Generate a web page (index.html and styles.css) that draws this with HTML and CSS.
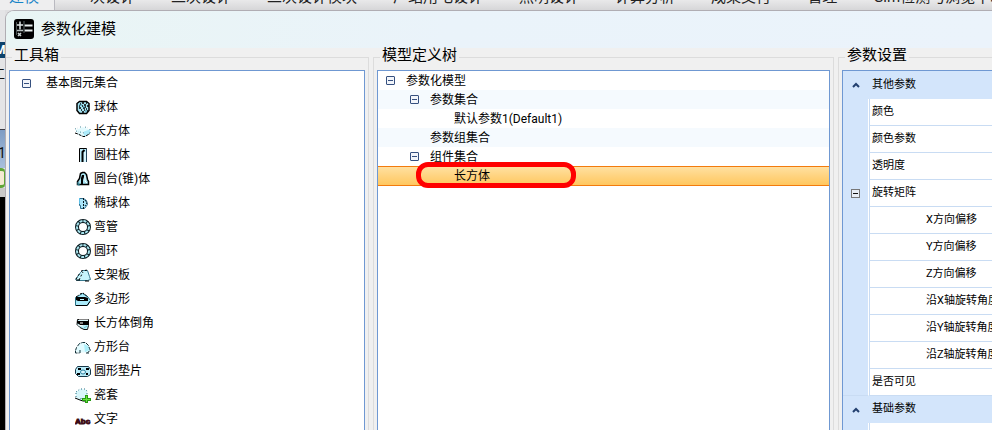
FILE: index.html
```html
<!DOCTYPE html>
<html lang="zh-CN">
<head>
<meta charset="utf-8">
<title>参数化建模</title>
<link rel="stylesheet" href="styles.css">
</head>
<body>
<div class="desktop">
  <nav class="ribbon">
    <a class="tab tab-active" href="#">建模</a>
    <a class="tab" href="#">一次设计</a>
    <a class="tab" href="#">二次设计</a>
    <a class="tab" href="#">二次设计模块</a>
    <a class="tab" href="#">厂站用电设计</a>
    <a class="tab" href="#">照明设计</a>
    <a class="tab" href="#">计算分析</a>
    <a class="tab" href="#">成果交付</a>
    <a class="tab" href="#">管理</a>
    <a class="tab" href="#">Gim检测与浏览中心</a>
  </nav>
  <div class="workspace">
    <aside class="backdrop">
      <div class="bd-top"></div>
      <div class="bd-logo">M</div>
      <div class="bd-link">工</div>
      <div class="bd-tab">1</div>
      <div class="bd-tool"></div>
      <div class="bd-edge"></div>
      <div class="bd-canvas"></div>
    </aside>
    <main class="window">
      <header class="titlebar">
        <svg class="app-icon" viewBox="0 0 20 20" aria-hidden="true">
          <rect width="20" height="20" rx="3" fill="#000"/>
          <path d="M3 6h6M6 2.500v8" stroke="#dfe6e6" stroke-width="1.500" fill="none"/>
          <path d="M10.500 6.500h8M10.500 11.500h8" stroke="#e8eeee" stroke-width="2" fill="none"/>
          <path d="M10 2v12" stroke="#5d6666" fill="none"/>
          <path d="M2 11.500h7" stroke="#b5bebe" stroke-width="1.500"/>
          <path d="M4 14l3 3M7 14l-3 3" stroke="#c8d0d0" stroke-width="1.500" fill="none"/>
          <path d="M2.500 3v13" stroke="#4b5252"/>
        </svg>
        <h1>参数化建模</h1>
      </header>
      <div class="groups">
        <fieldset class="group group-first">
          <legend>工具箱</legend>
          <ul class="panel toolbox">
            <li class="tool-root"><button class="toggle" type="button" aria-label="折叠"></button>基本图元集合</li>
            <li><svg viewBox="0 0 16 16"><path d="M4.500 2.500h7l2.500 2v7l-2.500 3h-7L2 11.500v-7z" fill="#a5e2f0" stroke="#000" stroke-width="1.500"/><path d="M4 7h1M5 5h1M7 4h2M11 4h1M4 9h2M7 7h1M9 6h2M12 7h2M6 11h1M8 9h2M11 10h1M7 13h2M12 12h1M10 8h1M9 11h1" stroke="#000" stroke-width="1.500"/><path d="M4 6h3M8 8h2M10 12h2" stroke="#39829b"/></svg>球体</li>
            <li><svg viewBox="0 0 16 16"><path d="M1 7L8 4l7 3v4l-6 3-6-2z" fill="#e2fafe"/><path d="M9 8.500l6-2v4l-6 3z" fill="#abeafa"/><path d="M0 6l3-1M5 4h3M10 4l3 1M15 6v5M1 8l3 1M5 9l4 1" stroke="#498b9b" stroke-dasharray="1 2" fill="none"/><path d="M0 10l3 1 5 2.500h2l5-3" stroke="#000" stroke-dasharray="3 1" fill="none"/></svg>长方体</li>
            <li><svg viewBox="0 0 16 16"><path d="M4.500 15V1.500h7V15" fill="#b9ebfa" stroke="#000"/><path d="M7.500 15V5l2-2" stroke="#000" stroke-width="2" fill="none"/><path d="M9 5h2v10H9z" fill="#d8f6ff"/><path d="M11.500 2v13" stroke="#23455d"/></svg>圆柱体</li>
            <li><svg viewBox="0 0 16 16"><path d="M5.500 2.500l2-1h2l2 2 1 5 1 2v3H2.500v-3l2-3z" fill="#a5e2f0" stroke="#000" stroke-width="1.500"/><path d="M6 14V7l1-3h2v2l-1 3v4z" fill="#000"/><path d="M10 5v5l2 2" stroke="#fff" fill="none"/><path d="M3 11v3h2" stroke="#3694aa" fill="none"/></svg>圆台(锥)体</li>
            <li><svg viewBox="0 0 16 16"><path d="M4.500 3.500h4l3 2 1 4-3 4h-4v-3h-1z" fill="#a9e5fa" stroke="#306e8d"/><path d="M8.500 3v11M10 5l2 3-2 3" stroke="#071820" stroke-dasharray="2 1" fill="none"/><path d="M4.500 3v6" stroke="#5dbfe8"/></svg>椭球体</li>
            <li><svg viewBox="0 0 16 16"><circle cx="8" cy="8" r="6" fill="none" stroke="#0b1c22" stroke-width="4"/><circle cx="8" cy="8" r="6" fill="none" stroke="#a6e2ec" stroke-width="2" stroke-dasharray="3 1"/></svg>弯管</li>
            <li><svg viewBox="0 0 16 16"><circle cx="8" cy="8" r="6" fill="none" stroke="#0b1c22" stroke-width="4"/><circle cx="8" cy="8" r="6" fill="none" stroke="#a6e2ec" stroke-width="2" stroke-dasharray="3 1"/></svg>圆环</li>
            <li><svg viewBox="0 0 16 16"><path d="M.5 12.500l5-7 2-2h5l2 6 1 3-3 1H2z" fill="#c6f5fc" stroke="#36778c"/><path d="M1 12l4-6M6 4l7-1M4 13l4-8" stroke="#000" stroke-dasharray="2 2" fill="none"/><path d="M1 13h4M10 14h4" stroke="#000"/></svg>支架板</li>
            <li><svg viewBox="0 0 16 16"><path d="M.5 6.500l7-4 5 3 3 4-3 5H.5z" fill="#a9eafa" stroke="#267084"/><path d="M1 6l3-2M5 3l3-1 5 4" stroke="#000" stroke-dasharray="2 1" fill="none"/><path d="M1 6h9l3 1v3H3L1 9z" fill="#000"/><path d="M1 14.500h11l3-4" stroke="#000" fill="none"/><path d="M5 8.500h4" stroke="#c5f7ff"/></svg>多边形</li>
            <li><svg viewBox="0 0 16 16"><path d="M2.500 4.500h11v6l-1 4H9l-4-2-3-3z" fill="#b4edf6" stroke="#111"/><path d="M2 6h12v4H5L2 8z" fill="#000"/><path d="M4 5h9M3 10l5 1M5 8h3" stroke="#fff"/><path d="M9 13l3-2" stroke="#6bbacd"/></svg>长方体倒角</li>
            <li><svg viewBox="0 0 16 16"><path d="M.5 11.500l4-7 4-1 5 3 2 5-4 2-9 0z" fill="#e1fbff"/><path d="M9 5l4 2 2 4-5 2z" fill="#abeffb"/><path d="M.5 11.500l1-3 3-4 3-1h3l3 3 1 3 1 2-3 2M.5 12v2h4M5 11v3M11 14h3" fill="none" stroke="#123038" stroke-dasharray="4 1"/></svg>方形台</li>
            <li><svg viewBox="0 0 16 16"><path d="M2.500 3.500h11l2 3v5l-3 2h-9l-3-3v-4z" fill="#b8ebf8" stroke="#173849"/><ellipse cx="8" cy="9" rx="2.500" ry="2" fill="#d9f6ff" stroke="#2c7f9d"/><path d="M3 5h3v2H3zM11 5h3v2h-3zM2 10h3v2H2zM11 10h2v2h-2z" fill="#000"/></svg>圆形垫片</li>
            <li><svg viewBox="0 0 16 16"><path d="M1 5l5-3 6 1v7l-5 4-6-3z" fill="#d8f6fb"/><path d="M1 5l4-3h5l2 2v4M1 6v4M6 11v2" fill="none" stroke="#247185" stroke-dasharray="1 2"/><path d="M0 11l5 2 3 1h4" stroke="#000" fill="none"/><path d="M11.500 8v8M7 12.500h9" stroke="#279b13" stroke-width="3"/><path d="M11.500 9v6M8 12.500h7" stroke="#65e13d"/></svg>瓷套</li>
            <li><svg viewBox="0 0 16 16"><text class="abc-icon" x="0" y="13">Abc</text></svg>文字</li>
          </ul>
        </fieldset>
        <fieldset class="group">
          <legend>模型定义树</legend>
          <div class="panel">
            <ul class="tree">
              <li><button class="toggle" type="button" aria-label="折叠"></button>参数化模型</li>
              <li class="level-2"><button class="toggle" type="button" aria-label="折叠"></button>参数集合</li>
              <li class="level-3 leaf">默认参数1(Default1)</li>
              <li class="level-2 leaf">参数组集合</li>
              <li class="level-2"><button class="toggle" type="button" aria-label="折叠"></button>组件集合</li>
              <li class="level-3 leaf selected">长方体<span class="marker"></span></li>
            </ul>
          </div>
        </fieldset>
        <fieldset class="group group-last">
          <legend>参数设置</legend>
          <div class="panel">
            <table class="props">
              <tbody>
                <tr class="category"><td><button class="chevron" type="button" aria-label="收起"><svg viewBox="0 0 8 6"><path d="M1 5l3-3 3 3" fill="none" stroke="#23406f" stroke-width="2"/></svg></button></td><th>其他参数</th></tr>
                <tr><td></td><th>颜色</th></tr>
                <tr><td></td><th>颜色参数</th></tr>
                <tr><td></td><th>透明度</th></tr>
                <tr><td><button class="toggle toggle-gray" type="button" aria-label="折叠"></button></td><th>旋转矩阵</th></tr>
                <tr class="child"><td></td><th>X方向偏移</th></tr>
                <tr class="child"><td></td><th>Y方向偏移</th></tr>
                <tr class="child"><td></td><th>Z方向偏移</th></tr>
                <tr class="child"><td></td><th>沿X轴旋转角度</th></tr>
                <tr class="child"><td></td><th>沿Y轴旋转角度</th></tr>
                <tr class="child"><td></td><th>沿Z轴旋转角度</th></tr>
                <tr class="last"><td></td><th>是否可见</th></tr>
                <tr class="category"><td><button class="chevron" type="button" aria-label="收起"><svg viewBox="0 0 8 6"><path d="M1 5l3-3 3 3" fill="none" stroke="#23406f" stroke-width="2"/></svg></button></td><th>基础参数</th></tr>
                <tr><td></td><th></th></tr>
              </tbody>
            </table>
          </div>
        </fieldset>
      </div>
    </main>
  </div>
</div>
</body>
</html>
```
FILE: styles.css
```css
* { box-sizing: border-box; }

body {
  margin: 0;
  color: #000;
  font: 12px/18px Roboto, "Noto Sans CJK SC", sans-serif;
}

ul { margin: 0; padding: 0; list-style: none; }
button { padding: 0; border: 0; background: none; }

.desktop {
  display: flex;
  flex-direction: column;
  height: 100vh;
  overflow: hidden;
  background: #dfdfe1;
}

/* ribbon tabs, scrolled so that only their lower edge shows */
.ribbon {
  display: flex;
  align-items: flex-end;
  flex: none;
  height: 10px;
  overflow: hidden;
  background: linear-gradient(#e9e9ea, #d6d6d8);
}

.tab {
  flex: none;
  margin-right: 36px;
  padding-bottom: 2px;
  color: #222;
  font-size: 15px;
  line-height: 22px;
  text-decoration: none;
}

.tab-active {
  margin-right: 20px;
  padding-left: 9px;
  padding-right: 15px;
  border-right: 1px solid #b9b9c0;
  background: #eeeeef;
  color: #1684c7;
}

.workspace {
  display: grid;
  grid-template-columns: 5px minmax(0, 1fr);
  flex: 1;
  min-height: 0;
}

/* sliver of the application behind the dialog */
.backdrop {
  display: flex;
  flex-direction: column;
  overflow: hidden;
  background: #e4e4e6;
}

.bd-top { height: 32px; }
.bd-logo { height: 16px; background: #0d426b; color: #fff; font-weight: bold; line-height: 16px; text-indent: -5px; }
.bd-link { height: 72px; padding-top: 8px; border-bottom: 1px solid #3c3c46; color: #111; text-indent: -7px; }
.bd-tab { height: 38px; padding-top: 14px; background: linear-gradient(#7e9cc4, #a9bfdc); color: #111; font-size: 14px; text-indent: -2px; }
.bd-tool { height: 20px; border: solid #5fa536; border-width: 3px 1px 3px 0; border-radius: 0 4px 4px 0; background: #f4ead2; }
.bd-edge { height: 9px; background: #c9c9c9; }
.bd-canvas { flex: 1; background: #000; }

.window {
  display: flex;
  flex-direction: column;
  min-width: 0;
  min-height: 0;
  overflow: hidden;
  border: solid #b0adb3;
  border-width: 1px 0 0 1px;
  border-radius: 9px 0 0 0;
  background: #f0f0f0;
}

.titlebar {
  display: flex;
  align-items: center;
  flex: none;
  gap: 7px;
  height: 37px;
  padding: 0 8px 2px;
  background: linear-gradient(100deg, #e9f5f4, #eaf3fa 45%, #ebf3fb);
}

.app-icon { width: 20px; height: 20px; }

h1 {
  margin: 0;
  font-size: 15px;
  font-weight: normal;
  line-height: 20px;
}

.groups {
  display: grid;
  grid-template-columns: 363fr 461fr 154fr;
  grid-template-rows: minmax(0, 1fr);
  gap: 4px;
  flex: 1;
  min-height: 0;
}

.group {
  min-width: 0;
  min-height: 0;
  margin: 0;
  padding: 4px 3px 0;
  border: 1px solid #dcdcdc;
  border-bottom: 0;
}

.group-first { border-left: 0; }
.group-last { padding-right: 0; border-right: 0; }

legend {
  margin-left: 3px;
  padding: 0 2px 4px;
  font-size: 15px;
  line-height: 14px;
}

.panel {
  height: 100%;
  overflow: hidden;
  border: 1px solid #6f98d2;
  border-bottom: 0;
  background: #fff;
}

.group-last .panel { border-right: 0; }

.toolbox li {
  display: flex;
  align-items: center;
  gap: 3px;
  height: 24px;
  padding-left: 65px;
}

.toolbox svg { width: 16px; height: 16px; }
.toolbox .tool-root { gap: 15px; padding-left: 12px; }

.abc-icon { fill: #3d0d16; stroke: #3d0d16; stroke-width: 1px; font: bold 8px "Liberation Sans", sans-serif; }

.toggle {
  display: block;
  flex: none;
  width: 9px;
  height: 9px;
  border: 1px solid #36507f;
  border-radius: 1px;
  background: linear-gradient(#36507f, #36507f) center / 5px 1px no-repeat #f2f5fa;
}

.toggle-gray {
  margin: 0 auto;
  border-color: #777;
  border-radius: 0;
  background: linear-gradient(#111, #111) center / 5px 1px no-repeat #e8eef6;
}

.tree li {
  display: flex;
  align-items: center;
  gap: 11px;
  height: 19px;
  padding-left: 8px;
  white-space: nowrap;
}

.tree li:nth-child(even) { background: #f5fafe; }
.tree .level-2 { padding-left: 32px; }
.tree .level-2.leaf { padding-left: 52px; }
.tree .level-3 { padding-left: 76px; }

.tree li.selected {
  position: relative;
  height: 20px;
  border: solid #f37b0d;
  border-width: 1px 0;
  background: linear-gradient(#ffe0a0, #ffc75f);
}

/* highlight ring drawn over the selected row */
.marker {
  position: absolute;
  top: -5px;
  left: 38px;
  width: 160px;
  height: 26px;
  border: 5px solid #f00;
  border-radius: 12px;
}

.props {
  width: 100%;
  table-layout: fixed;
  border-collapse: separate;
  border-spacing: 0;
  font-size: 11px;
}

.props td {
  width: 26px;
  height: 27px;
  padding: 0;
  border-right: 1px solid #fff;
  background: #d3e5fb;
}

.props th {
  height: 27px;
  padding: 0 0 0 2px;
  overflow: hidden;
  border-bottom: 1px solid #c9dcf3;
  border-left: 1px solid #c9dcf3;
  font-weight: normal;
  text-align: left;
  white-space: nowrap;
}

.props .child th { padding-left: 56px; }
.props .category td { border-right-color: #d3e5fb; }
.props .category th { border-color: #d3e5fb; background: #d3e5fb; }
.props .category:first-child td { height: 28px; }
.props .last td { border-bottom: 1px solid #c9dcf3; }

.chevron { display: block; width: 8px; height: 6px; margin: 0 auto; }
.chevron svg { display: block; width: 8px; height: 6px; }
```
